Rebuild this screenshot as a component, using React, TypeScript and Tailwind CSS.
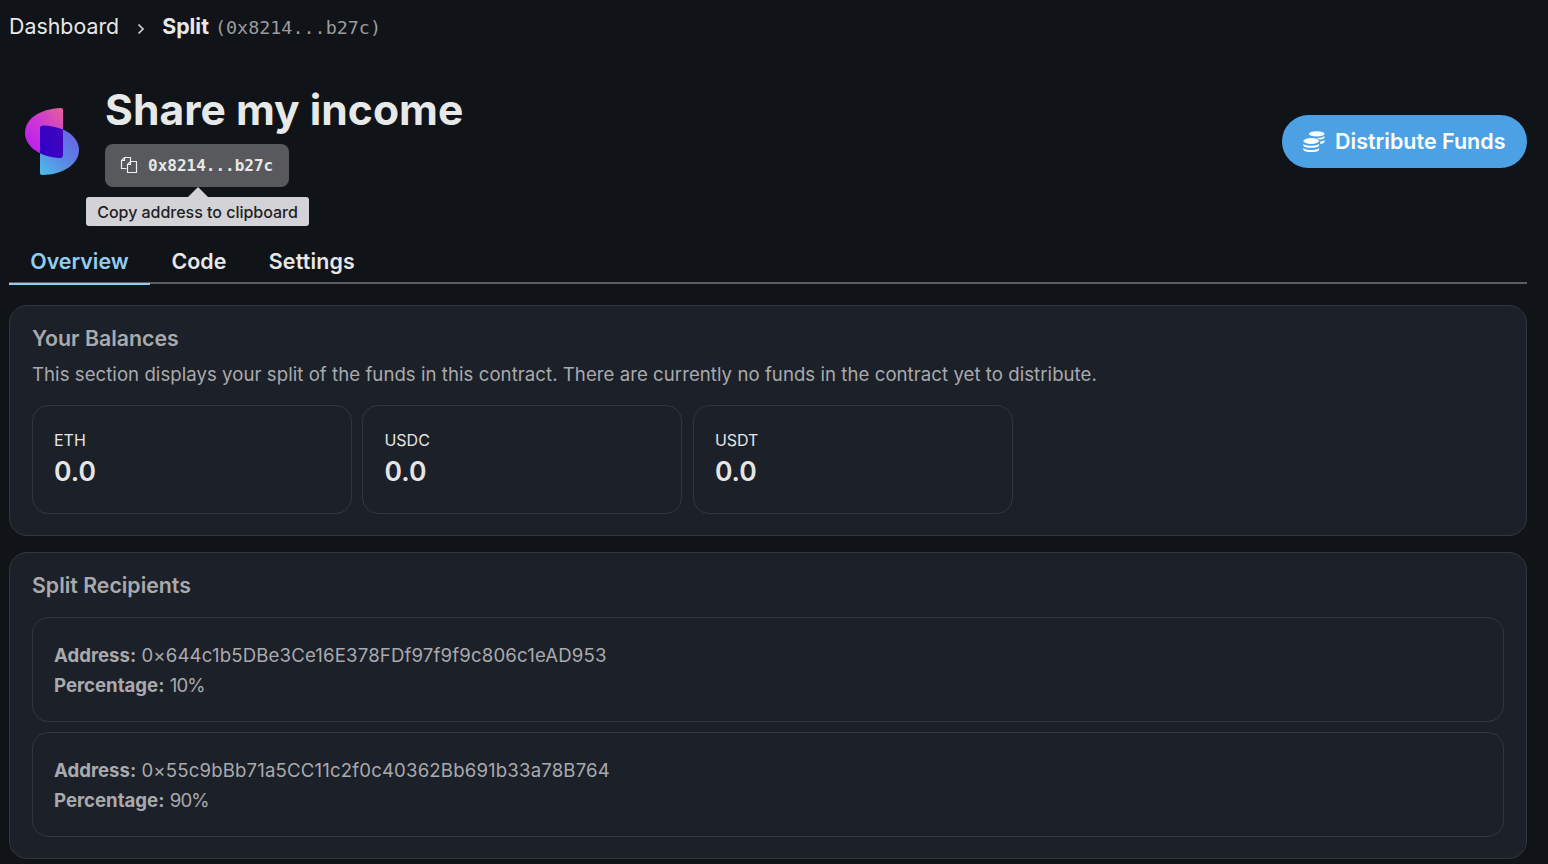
import type { ReactNode } from "react";

const mono = "font-['DejaVu_Sans_Mono',monospace]";

function Logo() {
  return (
    <svg width="54" height="68" viewBox="0 0 54 68" className="shrink-0">
      <defs>
        <linearGradient id="top" x1="0.95" y1="0" x2="0.3" y2="0.75">
          <stop offset="0" stopColor="#e3619a" />
          <stop offset="0.55" stopColor="#cf3bd0" />
          <stop offset="1" stopColor="#c026e8" />
        </linearGradient>
        <linearGradient id="bottom" x1="0.8" y1="0.1" x2="0.1" y2="1">
          <stop offset="0" stopColor="#6a62e8" />
          <stop offset="0.5" stopColor="#5a86e4" />
          <stop offset="1" stopColor="#4fb8e6" />
        </linearGradient>
        <linearGradient id="overlap" x1="0" y1="0.7" x2="1" y2="0.3">
          <stop offset="0" stopColor="#3000c8" />
          <stop offset="1" stopColor="#4808b8" />
        </linearGradient>
        <clipPath id="topClip">
          <path d="M36 0Q38 0 38 2V47Q38 50 35 50C14 49 0 38 0 25C0 11 14 1 36 0Z" />
        </clipPath>
      </defs>
      <path d="M36 0Q38 0 38 2V47Q38 50 35 50C14 49 0 38 0 25C0 11 14 1 36 0Z" fill="url(#top)" />
      <path d="M18 17.500C40 18 54 29 54 42C54 56 38 67 17 67Q15 67 15 65V20Q15 17.500 18 17.500Z" fill="url(#bottom)" />
      <path clipPath="url(#topClip)" d="M18 17.500C40 18 54 29 54 42C54 56 38 67 17 67Q15 67 15 65V20Q15 17.500 18 17.500Z" fill="url(#overlap)" />
    </svg>
  );
}

function CopyIcon() {
  return (
    <svg width="18" height="18" viewBox="0 0 18 18" fill="none" stroke="#f0f0f0" strokeWidth="1.150" className="-mt-[1px]">
      <path d="M6.500 12.500H1.500V4.500L4.500 1.500H10.500V5.500" />
      <path d="M1.500 4.500H4.500V1.500" />
      <path d="M7.500 8.500L10.500 5.500H16.500V16.500H7.500Z" />
      <path d="M7.500 8.500H10.500V5.500" />
    </svg>
  );
}

function CoinsIcon() {
  return (
    <svg width="22" height="22" viewBox="0 0 22 22" fill="white">
      <ellipse cx="13.700" cy="2.900" rx="7.800" ry="2.700" />
      <path d="M21.500 5.100V6.600C21 7.800 19 8.400 16.700 8.700C15.500 7.600 13.800 7 11.500 6.700C15 7.200 20 7 21.500 5.100Z" />
      <path d="M21.500 9V11C21 12 19.500 12.700 17.300 13V10.400C19.300 10.100 20.800 9.700 21.500 9Z" />
      <ellipse cx="8.200" cy="10" rx="7.900" ry="2.900" />
      <path d="M.3 12.700C2.500 15.400 14 15.400 16.100 12.700V14.400C15.500 17.500 1 17.500 .3 14.400Z" />
      <path d="M.3 17C2.500 19.700 14 19.700 16.100 17V18.700C15.500 21.900 1 21.900 .3 18.700Z" />
    </svg>
  );
}

function Balance({ token }: { token: string }) {
  return (
    <div className="h-[109px] w-[320px] rounded-2xl border border-[#32363d] px-[21px] pt-[22px] text-[#e5e5e5]">
      <div className="text-base leading-6">{token}</div>
      <div className="mt-[1px] text-[26.500px] leading-9 font-semibold">0.0</div>
    </div>
  );
}

function Recipient({ address, percentage }: { address: string; percentage: string }) {
  return (
    <div className="h-[105px] rounded-2xl border border-[#32363d] px-[21px] pt-[22px] text-[18.600px] leading-[30px]">
      <div><b>Address:</b> <span className="tracking-[0.160px]">{address}</span></div>
      <div><b>Percentage:</b> <span className="tracking-[-0.800px]">{percentage}</span></div>
    </div>
  );
}

function Panel({ title, className, children }: { title: string; className: string; children: ReactNode }) {
  return (
    <section className={`rounded-[18px] border border-[#32363d] bg-[#1c2028] px-[22px] pt-[16px] text-[#a9aaad] ${className}`}>
      <h2 className="text-[21.300px] leading-8 font-semibold">{title}</h2>
      {children}
    </section>
  );
}

export default function App() {
  return (
    <main className="h-[864px] overflow-hidden bg-[#101317] pr-[21px] pl-[9px] font-['Inter',sans-serif] text-[#e7e8e8]">
      <nav className="flex h-[54px] items-center whitespace-nowrap">
        <span className="text-[21.300px] tracking-[0.040px]">Dashboard</span>
        <svg width="8" height="12" viewBox="0 0 8 12" fill="none" stroke="#d0d0d0" strokeWidth="1.700" className="mt-[3px] ml-[18px]">
          <path d="M1.500 1.500L6 6L1.500 10.500" />
        </svg>
        <span className="ml-[17px] text-[21.300px] font-bold">Split</span>
        <span className={`${mono} mt-[2px] ml-[6px] text-[18.400px] text-[#9b9c9e]`}>(0x8214...b27c)</span>
      </nav>

      <header className="flex h-[185px] items-start justify-between">
        <div className="flex pl-4">
          <div className="pt-[54px]"><Logo /></div>
          <div className="ml-[26px] pt-[29px]">
            <h1 className="text-[42.600px] leading-[54px] font-bold whitespace-nowrap">Share my income</h1>
            <div className="relative mt-[7px] w-[184px]">
              <button className="flex h-[43px] w-full items-center rounded-lg bg-[#58595c] pl-[15px]">
                <CopyIcon />
                <span className={`${mono} ml-[10px] text-base font-bold`}>0x8214...b27c</span>
              </button>
              <div className="absolute top-[53px] left-[-19px] h-[29px] w-[223px] rounded-[3px] bg-[#d3d2d6] text-center text-base leading-[30px] font-medium tracking-[-0.020px] whitespace-nowrap text-[#202124]">
                Copy address to clipboard
                <svg width="20" height="10" viewBox="0 0 20 10" className="absolute -top-[10px] left-[102px]">
                  <path d="M0 10L10 0L20 10Z" fill="#d3d2d6" />
                </svg>
              </div>
            </div>
          </div>
        </div>
        <button className="mt-[61px] flex h-[53px] w-[245px] items-center rounded-full bg-[#4ba1e3] pl-[21px] text-[21.500px] font-semibold whitespace-nowrap text-white">
          <CoinsIcon />
          <span className="ml-[10px]">Distribute Funds</span>
        </button>
      </header>

      <div className="flex h-[45px] border-b-2 border-[#5b5e61] text-[21.400px] leading-[45px] font-semibold">
        <div className="h-[46px] w-[141px] border-b-2 border-[#90cdf4] text-center text-[#90cdf4]">Overview</div>
        <div className="ml-[21.500px]">Code</div>
        <div className="ml-[42.500px] tracking-[0.150px]">Settings</div>
      </div>

      <Panel title="Your Balances" className="mt-[21px] h-[231px]">
        <p className="mt-[5px] text-[18.600px] leading-[30px] tracking-[0.050px]">
          This section displays your split of the funds in this contract. There are currently no funds in the contract yet to distribute.
        </p>
        <div className="mt-[16px] flex gap-[10.450px]">
          <Balance token="ETH" />
          <Balance token="USDC" />
          <Balance token="USDT" />
        </div>
      </Panel>

      <Panel title="Split Recipients" className="mt-4 h-[307px]">
        <div className="mt-[16px] flex flex-col gap-[10px]">
          <Recipient address="0×644c1b5DBe3Ce16E378FDf97f9f9c806c1eAD953" percentage="10%" />
          <Recipient address="0×55c9bBb71a5CC11c2f0c40362Bb691b33a78B764" percentage="90%" />
        </div>
      </Panel>
    </main>
  );
}
